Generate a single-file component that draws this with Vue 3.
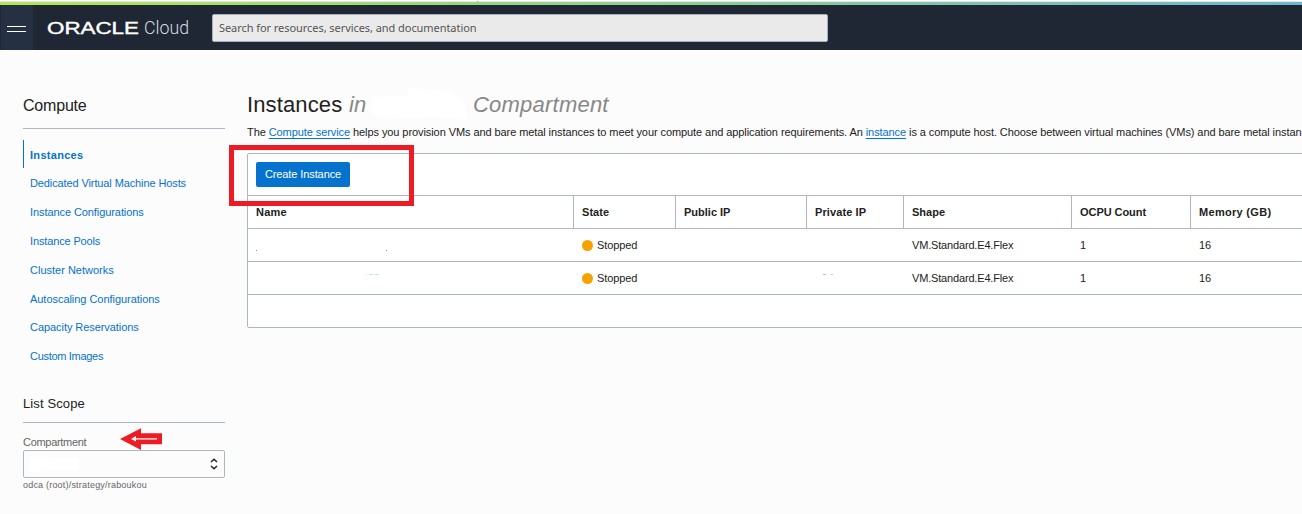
<script setup>
// `ls` is the letter spacing of a label, in pixels
const links = [
  { label: 'Instances', ls: 0.3, active: true },
  { label: 'Dedicated Virtual Machine Hosts', ls: -0.11 },
  { label: 'Instance Configurations', ls: -0.08 },
  { label: 'Instance Pools', ls: -0.14 },
  { label: 'Cluster Networks', ls: 0 },
  { label: 'Autoscaling Configurations', ls: -0.04 },
  { label: 'Capacity Reservations', ls: -0.06 },
  { label: 'Custom Images', ls: -0.3 },
]
const columns = [
  { label: 'Name', ls: 0.25 },
  { label: 'State', ls: 0.05 },
  { label: 'Public IP', ls: 0 },
  { label: 'Private IP', ls: 0.1 },
  { label: 'Shape', ls: 0 },
  { label: 'OCPU Count', ls: -0.06 },
  { label: 'Memory (GB)', ls: 0.3 },
]
const rows = [
  { state: 'Stopped', shape: 'VM.Standard.E4.Flex', ocpu: 1, memory: 16 },
  { state: 'Stopped', shape: 'VM.Standard.E4.Flex', ocpu: 1, memory: 16 },
]
</script>

<template>
  <div class="page">
    <div class="accent"><i class="tick"></i></div>
    <header class="topbar">
      <button class="menu" aria-label="Menu"><span></span><span></span></button>
      <svg class="logo" width="144" height="24" viewBox="0 0 144 24">
        <text class="oracle" x="0" y="18" textLength="92" lengthAdjust="spacingAndGlyphs">ORACLE</text>
        <text class="cloud" x="97" y="18" textLength="45" lengthAdjust="spacingAndGlyphs">Cloud</text>
      </svg>
      <div class="search">Search for resources, services, and documentation</div>
    </header>

    <div class="body">
      <aside class="side">
        <h2>Compute</h2>
        <nav>
          <a v-for="l in links" :key="l.label" :class="{ active: l.active }" :style="{ letterSpacing: l.ls + 'px' }">{{ l.label }}</a>
        </nav>
        <h3>List Scope</h3>
        <div class="label">
          <span>Compartment</span>
          <svg class="arrow" width="43" height="23" viewBox="0 0 43 23">
            <path d="M0 11 21 0.300V5.300H42V16.300H21V22Z" fill="#ed1c24" />
            <path d="M11 11 16 8V10.200H37V11.500H16V13.500Z" fill="#fff" />
          </svg>
        </div>
        <div class="select">
          <svg class="smudge" width="60" height="20" viewBox="0 0 60 20"><path d="M6 2 15 3 55 4V16L22 16 16 18 5 16Z" fill="#fff" /></svg>
          <svg width="8" height="12" viewBox="0 0 8 12" fill="none" stroke="#222" stroke-width="1.500"><path d="M1 4 4 1.200 7 4M1 8 4 10.800 7 8" /></svg>
        </div>
        <div class="hint">odca (root)/strategy/raboukou</div>
      </aside>

      <main>
        <h1>
          <span class="t1">Instances</span><em class="t2">in</em>
          <svg class="blank" width="98" height="36" viewBox="0 0 98 36">
            <path d="M1 11 35 10 38 2 68 4 82 7 92 16 96 28 94 34 66 31 16 33 5 29 1 27Z" fill="#fff" />
          </svg>
          <em class="t3">Compartment</em>
        </h1>
        <p class="desc">The <a>Compute service</a> helps you provision VMs and bare metal instances to meet your compute and application requirements. An <a>instance</a> is a compute host. Choose between virtual machines (VMs) and bare metal instan</p>
        <section class="panel">
          <div class="toolbar"><button class="create">Create Instance</button><i class="frame"></i></div>
          <div class="row head"><div v-for="c in columns" :key="c.label" :style="{ letterSpacing: c.ls + 'px' }">{{ c.label }}</div></div>
          <div v-for="(r, i) in rows" :key="i" class="row">
            <div>
              <svg class="marks" width="200" height="20" viewBox="0 0 200 20">
                <path v-if="i === 0" d="M0 15.500h1M130 15.500h1" stroke="#0572ce" opacity=".7" />
                <path v-else d="M110 6.500h1M113 6.500h4M119 6.500h4" stroke="#c4e1f6" />
              </svg>
            </div>
            <div class="state"><i class="dot"></i>{{ r.state }}</div>
            <div></div>
            <div><svg v-if="i === 1" class="marks" width="40" height="20" viewBox="0 0 40 20"><path d="M8 6.500h3" stroke="#bbb" /><path d="M16 6.500h2" stroke="#e3c9a8" /></svg></div>
            <div class="shape">{{ r.shape }}</div>
            <div>{{ r.ocpu }}</div>
            <div>{{ r.memory }}</div>
          </div>
          <div class="foot"></div>
        </section>
      </main>
    </div>
  </div>
</template>

<style>
html, body { margin: 0; overflow: hidden; }
</style>

<style scoped>
* { box-sizing: border-box; }
.page { width: 1302px; height: 514px; overflow: hidden; background: #fcfcfc; font: 11px/14px "Liberation Sans", Arial, sans-serif; color: #222; }
.accent { position: relative; height: 5px; border-top: 1px solid #fff; background: linear-gradient(#e6e6ea, #e6e6ea) 0 0 / 100% 1px no-repeat, linear-gradient(90deg, #b3e653, #6bb8cc); }
.tick { position: absolute; left: 477px; top: 0; width: 1px; height: 1px; background: #999; }
.topbar { height: 45px; display: flex; align-items: center; background: #1e2733; }
.menu { width: 32px; height: 45px; margin: 0 14px 0 1px; padding: 3px 0 0 6px; border: 0; background: #253142; display: flex; flex-direction: column; justify-content: center; gap: 4px; }
.menu span { width: 19px; height: 1px; background: #fff; }
.logo { flex: none; }
.oracle { font: 17px "Liberation Sans", sans-serif; fill: #fff; stroke: #fff; stroke-width: .4px; }
.cloud { font: 300 18px Roboto, Lato, sans-serif; fill: #d8dce0; }
.search { width: 616px; height: 28px; margin-left: 21px; padding: 0 6px; border: 1px solid #aab0bc; border-radius: 2px; background: #eaeaea; color: #555; font: 11px/26px "Noto Sans", sans-serif; letter-spacing: -.06px; }
.body { display: flex; gap: 22px; padding-left: 23px; }
.side { flex: none; width: 202px; }
h2 { margin: 0; height: 79px; padding-top: 46px; border-bottom: 1px solid #aeb6c2; font-size: 16px; line-height: 20px; font-weight: 400; letter-spacing: -.2px; }
nav { padding: 10.600px 0 .4px; }
nav a { display: block; height: 28.800px; padding-left: 7px; line-height: 30.200px; color: #0572ce; }
nav a.active { font-weight: 700; border-left: 1px solid #0572ce; padding-left: 6px; }
h3 { margin: 25px 0 0; height: 28px; padding-top: 1px; font-size: 13px; line-height: 16px; font-weight: 400; letter-spacing: .12px; border-bottom: 1px solid #aeb6c2; }
.label { position: relative; height: 27px; padding-top: 12px; color: #666; letter-spacing: -.3px; }
.arrow { position: absolute; left: 97px; top: 5px; }
.select { width: 202px; height: 28px; border: 1px solid #aeb6c2; border-radius: 2px; display: flex; align-items: center; justify-content: space-between; padding-right: 6px; }
.hint { font-size: 9px; line-height: 14px; color: #666; letter-spacing: .2px; }
main { flex: none; width: 1100px; padding-top: 36px; }
h1 { display: flex; margin: 0; height: 36px; font-size: 22px; line-height: 37px; font-weight: 400; letter-spacing: .12px; }
.t1 { width: 102px; }
h1 em { color: #888; }
.t2 { width: 22px; }
.blank { flex: none; }
.t3 { margin-left: 4px; letter-spacing: .22px; }
.desc { margin: 0; height: 31px; padding-top: 3px; white-space: nowrap; letter-spacing: -.08px; }
.desc a { color: #0572ce; text-decoration: underline; text-underline-offset: 2px; }
.panel { border: 1px solid #aeb6c2; border-radius: 2px; background: #fff; }
.toolbar { position: relative; height: 41px; padding: 8px; }
.create { width: 94px; height: 25px; border: 0; border-radius: 2px; background: #0572ce; color: #fff; font: inherit; letter-spacing: -.1px; padding: 0 0 1px; white-space: nowrap; display: block; }
.frame { position: absolute; left: -19px; top: -9px; width: 185px; height: 61px; border: 5px solid #ed1c24; z-index: 2; }
.row { display: grid; grid-template-columns: 326px 102px 131px 97px 168px 119px 1fr; height: 33px; border-top: 1px solid #aeb6c2; }
.row > div { display: flex; align-items: center; padding-left: 8px; }
.head > div { border-right: 1px solid #aeb6c2; font-weight: 700; }
.dot { width: 11px; height: 11px; margin-right: 4px; border-radius: 50%; background: #f5a300; }
.state { letter-spacing: -.1px; }
.shape { letter-spacing: -.17px; }
.foot { height: 33px; border-top: 1px solid #aeb6c2; }
</style>
